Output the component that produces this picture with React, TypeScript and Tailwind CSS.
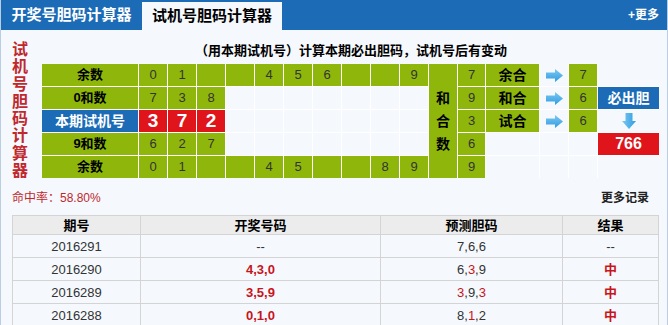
import React from "react";

const CJK = "font-['Liberation_Sans','Noto_Sans_CJK_SC',sans-serif]";

function RightArrow() {
  return (
    <svg width="17" height="13" viewBox="0 0 17 13">
      <defs>
        <linearGradient id="ra" x1="0" y1="0" x2="0" y2="1">
          <stop offset="0" stopColor="#7cc8f2" />
          <stop offset="1" stopColor="#2f9ce0" />
        </linearGradient>
      </defs>
      <path d="M0 3.5 H9 V0 L17 6.5 L9 13 V9.5 H0 Z" fill="url(#ra)" />
    </svg>
  );
}

function DownArrow() {
  return (
    <svg width="14" height="16" viewBox="0 0 14 16">
      <defs>
        <linearGradient id="da" x1="0" y1="0" x2="1" y2="0">
          <stop offset="0" stopColor="#7cc8f2" />
          <stop offset="1" stopColor="#2f9ce0" />
        </linearGradient>
      </defs>
      <path d="M3.5 0 H10.5 V8 H14 L7 16 L0 8 H3.5 Z" fill="url(#da)" />
    </svg>
  );
}

const G = "bg-[#8fb70b] flex items-center justify-center";
const E = "bg-[#f5f9fd]";

export default function App() {
  const top = ["0", "1", "", "", "4", "5", "6", "", "", "9"];
  const bot = ["0", "1", "", "", "4", "5", "", "", "8", "9"];
  const cells: React.ReactNode[] = [];

  cells.push(<div key="r1l" className={`${G} text-[13px] font-bold text-black`}>余数</div>);
  top.forEach((d, i) => cells.push(<div key={"t" + i} className={`${G} text-[13px] text-[#333]`}>{d}</div>));
  cells.push(
    <div key="hhs" className={`${G} row-span-5 flex-col text-[14px] font-bold text-black leading-[23px]`}>
      <span>和</span><span>合</span><span>数</span>
    </div>
  );
  const vals = ["7", "9", "3", "6", "9"];
  const hl = ["余合", "和合", "试合"];
  const res = ["7", "6", "6"];
  const rightPart = (r: number) => {
    const out: React.ReactNode[] = [];
    out.push(<div key={"v" + r} className={`${G} text-[13px] text-[#333]`}>{vals[r]}</div>);
    if (r < 3) {
      out.push(<div key={"h" + r} className={`${G} text-[14px] font-bold text-black`}>{hl[r]}</div>);
      out.push(<div key={"a" + r} className={`${E} flex items-center justify-center`}><RightArrow /></div>);
      out.push(<div key={"r" + r} className={`${G} text-[13px] text-[#333]`}>{res[r]}</div>);
    } else {
      out.push(<div key={"h" + r} className={E} />);
      out.push(<div key={"a" + r} className={E} />);
      out.push(<div key={"r" + r} className={E} />);
    }
    let last: React.ReactNode;
    if (r === 1) last = <div key={"l" + r} className="bg-[#1b6bb7] flex items-center justify-center text-white text-[14px] font-bold">必出胆</div>;
    else if (r === 2) last = <div key={"l" + r} className={`${E} flex items-center justify-center`}><DownArrow /></div>;
    else if (r === 3) last = <div key={"l" + r} className="bg-[#e0141b] flex items-center justify-center text-white text-[16px] font-bold">766</div>;
    else last = <div key={"l" + r} className={E} />;
    out.push(last);
    return out;
  };
  cells.push(...rightPart(0));
  cells.push(<div key="r2l" className={`${G} text-[13px] font-bold text-black`}>0和数</div>);
  ["7", "3", "8"].forEach((d, i) => cells.push(<div key={"r2" + i} className={`${G} text-[13px] text-[#333]`}>{d}</div>));
  for (let i = 0; i < 7; i++) cells.push(<div key={"r2e" + i} className={E} />);
  cells.push(...rightPart(1));
  cells.push(<div key="r3l" className="bg-[#1b6bb7] flex items-center justify-center text-[14px] font-bold text-white">本期试机号</div>);
  ["3", "7", "2"].forEach((d, i) => cells.push(<div key={"r3" + i} className="bg-[#e0141b] flex items-center justify-center text-[19px] font-bold text-white">{d}</div>));
  for (let i = 0; i < 7; i++) cells.push(<div key={"r3e" + i} className={E} />);
  cells.push(...rightPart(2));
  cells.push(<div key="r4l" className={`${G} text-[13px] font-bold text-black`}>9和数</div>);
  ["6", "2", "7"].forEach((d, i) => cells.push(<div key={"r4" + i} className={`${G} text-[13px] text-[#333]`}>{d}</div>));
  for (let i = 0; i < 7; i++) cells.push(<div key={"r4e" + i} className={E} />);
  cells.push(...rightPart(3));
  cells.push(<div key="r5l" className={`${G} text-[13px] font-bold text-black`}>余数</div>);
  bot.forEach((d, i) => cells.push(<div key={"b" + i} className={`${G} text-[13px] text-[#333]`}>{d}</div>));
  cells.push(...rightPart(4));

  const data = [
    { q: "2016291", k: "--", p: [["7", false], ["6", false], ["6", false]], r: "--" },
    { q: "2016290", k: "4,3,0", p: [["6", false], ["3", true], ["9", false]], r: "中" },
    { q: "2016289", k: "3,5,9", p: [["3", true], ["9", false], ["3", true]], r: "中" },
    { q: "2016288", k: "0,1,0", p: [["8", false], ["1", true], ["2", false]], r: "中" },
  ] as const;

  return (
    <div className={`w-[668px] h-[325px] overflow-hidden bg-[#f5f9fd] border-x border-[#b9cde3] ${CJK}`}>
      <div className="h-[30px] bg-[#1b6bb7] flex items-end">
        <div className="w-[141px] h-[30px] flex items-center justify-center text-white text-[15px] font-bold">开奖号胆码计算器</div>
        <div className="w-[140px] h-[28px] bg-[#f5f9fd] flex items-center justify-center text-black text-[15px] font-bold">试机号胆码计算器</div>
        <div className="flex-1 h-[30px] flex items-center justify-end pr-[8px] text-white text-[12px] font-bold">+更多</div>
      </div>
      <div className="flex">
        <div className="w-[41px] pl-[11px] pt-[11px] flex flex-col text-[16px] leading-[17.3px] font-bold text-[#c0282d]">
          {"试机号胆码计算器".split("").map((c, i) => (
            <span key={i}>{c}</span>
          ))}
        </div>
        <div className="flex flex-col">
          <div className="h-[34px] pt-[8px] flex items-center justify-center text-[13px] font-bold text-black w-[618px]">
            （用本期试机号）计算本期必出胆码，试机号后有变动
          </div>
          <div className="grid gap-px bg-white grid-cols-[96px_repeat(10,28px)_28px_27px_53px_28px_28px_61px] grid-rows-[repeat(5,22px)] w-fit">
            {cells}
          </div>
        </div>
      </div>
      <div className="flex items-center justify-between px-[11px] h-[36px] pt-[1px]">
        <span className="text-[12px] text-[#c0282d]">命中率：58.80%</span>
        <span className="text-[12px] font-bold text-[#222] pr-[7px]">更多记录</span>
      </div>
      <div className="px-[11px]">
        <table className="w-[647px] border-collapse text-center">
          <thead>
            <tr className="bg-[#ececec] h-[19px]">
              <th className="w-[128px] border border-[#d4d4d4] text-[13px] font-bold text-black leading-[17px]">期号</th>
              <th className="w-[240px] border border-[#d4d4d4] text-[13px] font-bold text-black leading-[17px]">开奖号码</th>
              <th className="w-[182px] border border-[#d4d4d4] text-[13px] font-bold text-black leading-[17px]">预测胆码</th>
              <th className="border border-[#d4d4d4] text-[13px] font-bold text-black leading-[17px]">结果</th>
            </tr>
          </thead>
          <tbody>
            {data.map((d) => (
              <tr key={d.q} className="h-[23px]">
                <td className="border border-[#d4d4d4] text-[13px] text-[#333]">{d.q}</td>
                <td className={`border border-[#d4d4d4] text-[13px] ${d.k === "--" ? "text-[#333]" : "text-[#c8141b] font-bold"}`}>{d.k}</td>
                <td className="border border-[#d4d4d4] text-[13px] text-[#333]">
                  {d.p.map(([n, red], i) => (
                    <React.Fragment key={i}>
                      {i > 0 && ","}
                      <span className={red ? "text-[#c8141b]" : ""}>{n}</span>
                    </React.Fragment>
                  ))}
                </td>
                <td className={`border border-[#d4d4d4] text-[13px] ${d.r === "--" ? "text-[#333]" : "text-[#c8141b] font-bold"}`}>{d.r}</td>
              </tr>
            ))}
          </tbody>
        </table>
      </div>
    </div>
  );
}
